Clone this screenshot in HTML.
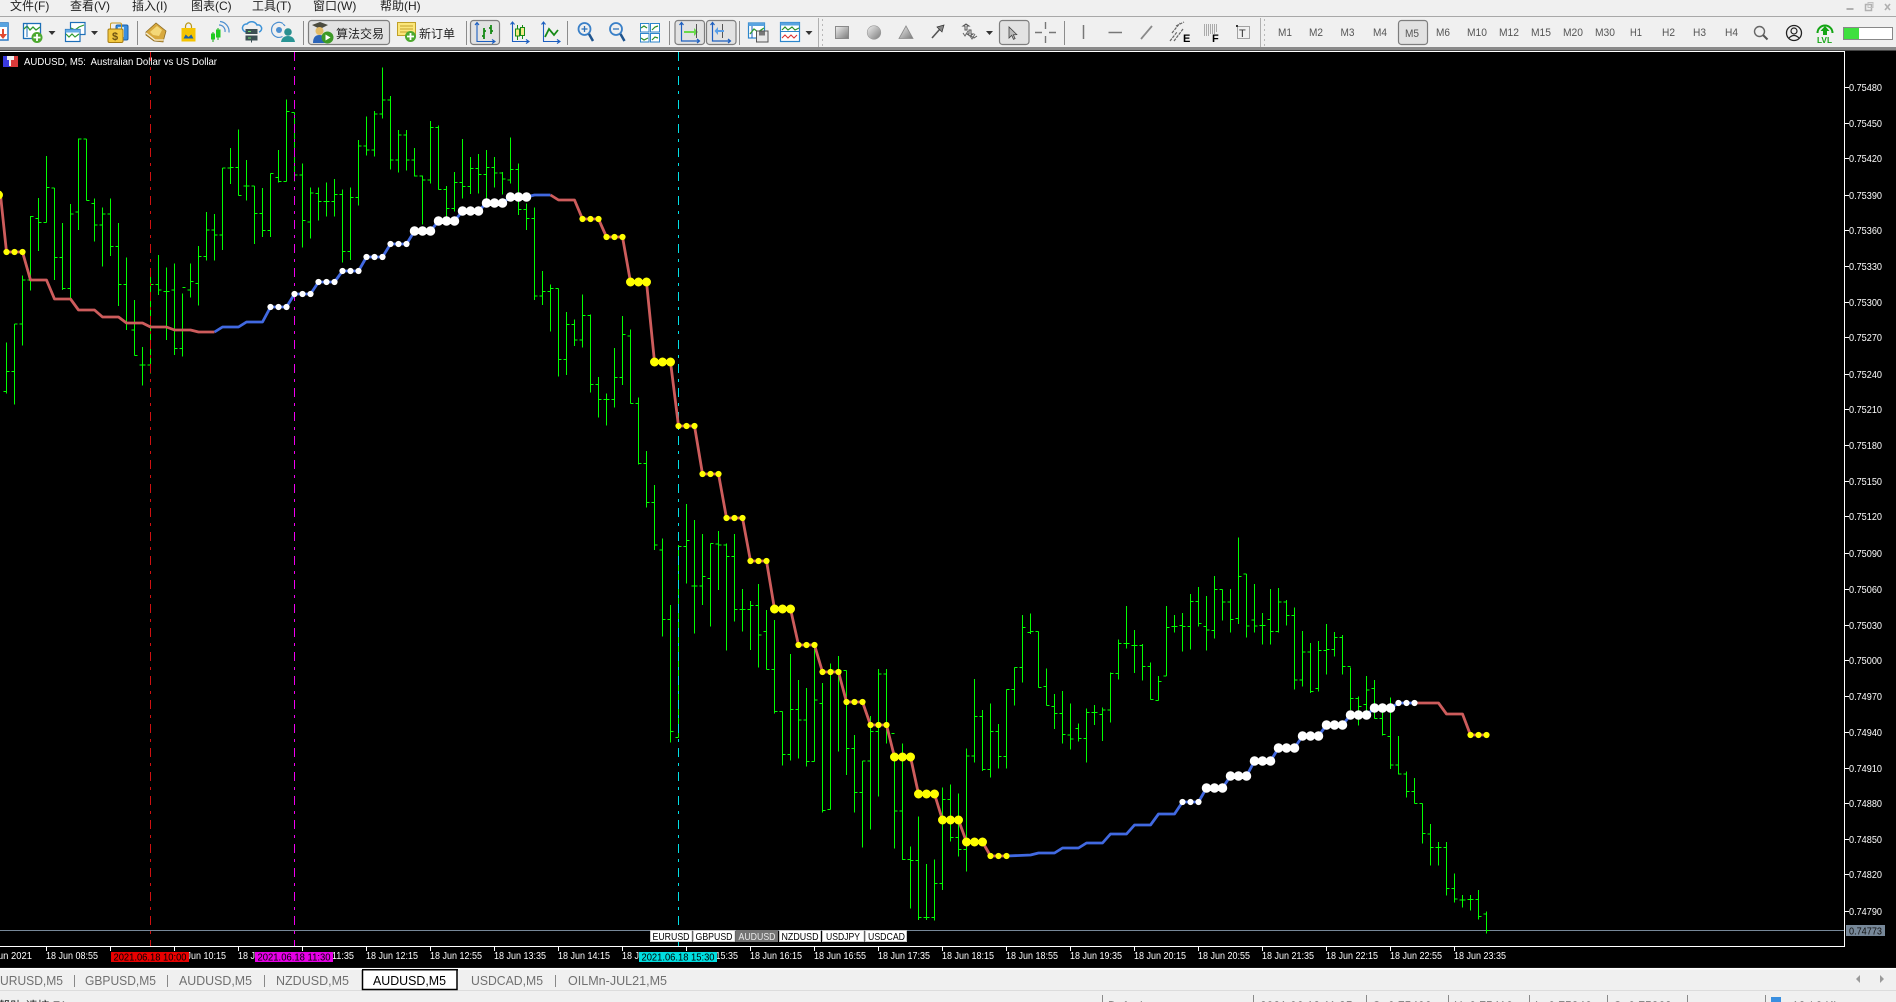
<!DOCTYPE html>
<html><head><meta charset="utf-8"><title>MT4</title>
<style>html,body{margin:0;padding:0;background:#f0f0f0;overflow:hidden;width:1896px;height:1002px}svg{display:block}
text{font-family:"Liberation Sans","Noto Sans CJK SC",sans-serif}</style></head><body>
<svg width="1896" height="1002" viewBox="0 0 1896 1002" xmlns="http://www.w3.org/2000/svg">
<rect width="1896" height="1002" fill="#f0f0f0"/>
<!-- menu -->
<g font-size="12" fill="#222">
<text x="10" y="10">文件(F)</text><text x="70" y="10">查看(V)</text><text x="132" y="10">插入(I)</text><text x="191" y="10">图表(C)</text><text x="252" y="10">工具(T)</text><text x="313" y="10">窗口(W)</text><text x="380" y="10">帮助(H)</text>
</g>
<rect x="0" y="16" width="1896" height="1" fill="#a8a8a8"/>
<rect x="0" y="47" width="1896" height="3" fill="#8a8a8a"/>
<rect x="0" y="50" width="1896" height="1" fill="#444"/>
<!-- window buttons -->
<path d="M1846.500 9h7" stroke="#b0b0b0" stroke-width="2"/><rect x="1865.500" y="4.500" width="6" height="6" fill="none" stroke="#b0b0b0" stroke-width="1.500"/><rect x="1868" y="2.500" width="5" height="5" fill="none" stroke="#c0c0c0"/><path d="M1885 4l5 6m0-6l-5 6" stroke="#b0b0b0" stroke-width="1.600"/>
<!-- pressed buttons -->
<g fill="#e2e2e2" stroke="#7e7e7e" stroke-width="1.200">
<rect x="308.500" y="20.500" width="81" height="24" rx="3"/><rect x="470.500" y="20.500" width="29" height="24" rx="3"/><rect x="675" y="20.500" width="29.500" height="24" rx="3"/><rect x="706.500" y="20.500" width="29.500" height="24" rx="3"/><rect x="999.500" y="20.500" width="29.500" height="24" rx="3"/><rect x="1398.500" y="20.500" width="29" height="24" rx="3"/>
</g>
<!-- separators -->
<path d="M137.500 21v24M303.500 21v24M466.500 21v24M567.500 21v24M669.500 21v24M739.500 21v24M1064.500 21v24" stroke="#8c8c8c"/>
<path d="M818.500 18v29M1260.500 18v29" stroke="#b0b0b0"/>
<path d="M822.500 19v28M1264.500 19v28" stroke="#b8b8b8" stroke-dasharray="2 3"/>
<!-- left icons -->
<rect x="-8" y="23" width="16" height="17" fill="#fff" stroke="#2b78c2" stroke-width="1.500"/><rect x="-8" y="23" width="16" height="4" fill="#5aa4e0"/><path d="M2 29v5h-3l4 5 4-5h-3v-5z" fill="#e2492f"/>
<rect x="23.500" y="23.500" width="17" height="15" fill="#fff" stroke="#1d6fb8" stroke-width="1.300"/><path d="M24 29l3-3 3 4 3-3 3 3 4-3" fill="none" stroke="#2f9b2f" stroke-width="1.300"/><path d="M27 24v13" stroke="#1d6fb8"/><circle cx="37" cy="37.500" r="5.500" fill="#4da92f"/><path d="M33.500 37.500h7M37 34v7" stroke="#fff" stroke-width="1.800"/>
<path d="M48.500 31h7l-3.500 4z" fill="#333"/>
<rect x="70.500" y="22.500" width="14.500" height="12" fill="#fff" stroke="#1d6fb8" stroke-width="1.200"/><path d="M71 28l4 2 4-3 5-2" fill="none" stroke="#2f9b2f" stroke-width="1.200"/>
<rect x="65.500" y="29.500" width="14.500" height="12" fill="#fff" stroke="#1d6fb8" stroke-width="1.200"/><rect x="65.500" y="29.500" width="14.500" height="3" fill="#68aee6"/><path d="M66 34l3 3 3-3 3 3 4-3" fill="none" stroke="#2f9b2f" stroke-width="1.200"/>
<path d="M91 31h7l-3.500 4z" fill="#333"/>
<rect x="116" y="25" width="12" height="15" rx="1.500" fill="#3a8fe0" stroke="#1c5fa8"/><rect x="118" y="27" width="6" height="10" fill="#bfe0fa"/>
<rect x="110.500" y="23" width="11" height="8" rx="1.500" fill="none" stroke="#c69a20"/><rect x="108" y="29" width="15" height="13.500" rx="1.500" fill="#f2c840" stroke="#a67c12"/><text x="112" y="40" font-size="11" fill="#6e5210" font-weight="bold">$</text>
<path d="M146 32l10-9 10 8-3 11-9-1-8-6z" fill="#d8a93e" stroke="#8a6a24" stroke-width=".8"/><path d="M150 32l7-6 5 4-3 6-6-1z" fill="#f4d878"/><path d="M146 33l9 7 9 0" stroke="#f4ecd0" fill="none" stroke-width="1.300"/>
<path d="M185.500 29v-2.500a2.500 3 0 0 1 6 0v2.500" fill="none" stroke="#b9971a" stroke-width="1.200"/><rect x="181.500" y="28" width="14" height="13.500" fill="#f5c400"/><path d="M183.500 38.500l2.200-4 2.800 2.500 2.800-2.500 2.200 4z" fill="#1c5fa8"/>
<path d="M213 32v10M218 28v12" stroke="#17a317"/><rect x="211" y="33.500" width="4" height="6" fill="#1fcb1f"/><rect x="216" y="29.500" width="4.500" height="8" fill="#1fcb1f"/><path d="M219 25a6 6 0 0 1 6 7M220 21.500a10 10 0 0 1 9 11" fill="none" stroke="#4c8fd0" stroke-width="1.200"/>
<path d="M246 32a4 4 0 0 1 1-8 6 6 0 0 1 10 1 3.500 3.500 0 0 1 2 7" fill="none" stroke="#3d93d8" stroke-width="1.500"/><rect x="245.500" y="29" width="12" height="5" fill="#3c5054"/><rect x="245.500" y="35.500" width="12" height="5" fill="#3c5054"/><path d="M248 31.500h3M248 38h3" stroke="#6fe06f"/><path d="M251.500 40.500v2" stroke="#3c5054"/>
<circle cx="279" cy="30" r="3" fill="#4c8fd0"/><path d="M283 23.500a7.500 7.500 0 1 0-.5 13M285 26a4 4 0 0 0-2-1.800" fill="none" stroke="#4c8fd0" stroke-width="1.200"/><circle cx="288" cy="32" r="3.800" fill="#2a8f8f"/><path d="M281 42q1-6 7-6t7 6z" fill="#2a9595"/>
<!-- algo -->
<path d="M312 25l8-3 8 3-8 4z" fill="#4b4b3f"/><circle cx="319.500" cy="31" r="4" fill="#e3bb66"/><path d="M313 43q0-8 6.500-8t6 8z" fill="#2c64b8"/><circle cx="327.500" cy="37.500" r="6" fill="#3d9a27"/><path d="M325.500 34.500l5 3-5 3z" fill="#fff"/>
<g font-size="12" fill="#222"><text x="336" y="38">算法交易</text><text x="419" y="38">新订单</text></g>
<rect x="397.500" y="22.500" width="18" height="13" fill="#fbe67a" stroke="#c0a028"/><path d="M400 26h13M400 29h13M400 32h8" stroke="#c5a22c"/><circle cx="410.500" cy="36.500" r="5.500" fill="#4da92f"/><path d="M407 36.500h7M410.500 33v7" stroke="#fff" stroke-width="1.800"/>
<!-- chart type -->
<g fill="none" stroke="#1d5fc0" stroke-width="1.100"><path d="M477 23v18.500h17M475 25l2-2.500 2 2.500M492 39.500l3 2-3 2"/><path d="M512.500 22v19.500h16M510.500 24.500l2-2.500 2 2.500M526 39.500l3 2-3 2"/><path d="M543.500 22v19.500h16M541.500 24.500l2-2.500 2 2.500M557 39.500l3 2-3 2"/></g>
<path d="M484 28v11M491 25v9M482 36h2M484 31h2M489 28h2M491 31h2" stroke="#168a16" stroke-width="1.800" fill="none"/>
<path d="M517.500 25v15M522.500 25v14" stroke="#168a16"/><rect x="515.500" y="29" width="4" height="7" fill="#f4e88a" stroke="#168a16"/><rect x="520.500" y="27.500" width="4" height="8" fill="#f4e88a" stroke="#168a16"/>
<path d="M545 37l4-8 5 6 4-5" fill="none" stroke="#168a16" stroke-width="1.800"/>
<!-- zoom -->
<g fill="none" stroke="#3a80c8" stroke-width="1.800"><circle cx="584.500" cy="29" r="6"/><circle cx="616" cy="29" r="6"/></g><path d="M589 34l4 7M620.500 34l4 7" stroke="#20558f" stroke-width="2.500"/><path d="M581.500 29h6M584.500 26v6M613 29h6" stroke="#2a70b8" stroke-width="1.300"/>
<!-- tile -->
<g fill="#fff" stroke="#2d86cc"><rect x="640.500" y="23.500" width="8.500" height="8.500"/><rect x="650.500" y="23.500" width="9" height="8.500"/><rect x="640.500" y="33.500" width="8.500" height="8.500"/><rect x="650.500" y="33.500" width="9" height="8.500"/></g>
<path d="M641 28l3-2 3 2M652 30l3-3 3-1M641 38l3 2 4-2M652 40l3-3 3 1" stroke="#2b8f2b" fill="none" stroke-width="1.200"/>
<!-- chart shift / autoscroll -->
<g fill="none" stroke="#1d5fc0" stroke-width="1.200"><path d="M681.500 23v18h17M679.500 25l2-2.500 2 2.500M697 39l2.500 2-2.500 2"/><path d="M712.500 23v18h17M710.500 25l2-2.500 2 2.500M728 39l2.500 2-2.500 2"/></g>
<path d="M684 31h10v-3l4 4-4 4v-3h-10z" fill="#69d94a"/><path d="M696.500 24v14M722.500 24v14" stroke="#555"/><path d="M729 30h-6v-3l-3.500 4 3.500 4v-3h6z" fill="#5a9fe8" transform="translate(-5,0)"/>
<!-- template / indicators -->
<rect x="748.500" y="23" width="16" height="15" fill="#fff" stroke="#2d86cc" stroke-width="1.200"/><rect x="748.500" y="23" width="16" height="3" fill="#5aa4e0"/><path d="M752 26v12" stroke="#1d5fc0"/><path d="M750 34l4-5 4 3 6-4" fill="none" stroke="#2f9b2f" stroke-width="1.300"/><rect x="756.500" y="31" width="11.500" height="11" fill="#e8e8e8" stroke="#555"/><rect x="759" y="31.500" width="6" height="4" fill="#777"/>
<rect x="780.500" y="22.500" width="19" height="19" fill="#fff" stroke="#2d86cc" stroke-width="1.200"/><rect x="780.500" y="22.500" width="19" height="3" fill="#5aa4e0"/><path d="M781 31.500h18" stroke="#2d86cc"/><path d="M782 30l3-3 3 3 4-3 3 3 4-2" fill="none" stroke="#2a8f2a" stroke-width="1.200"/><path d="M782 38l3-3 3 3 3-3 3 3 3-3" fill="none" stroke="#d33" stroke-width="1.100"/>
<path d="M805.500 31h7l-3.500 4z" fill="#333"/>
<!-- objects -->
<defs><linearGradient id="g" x1="0" y1="0" x2="1" y2="1"><stop offset="0" stop-color="#f0f0f0"/><stop offset="1" stop-color="#7a7a7a"/></linearGradient></defs>
<rect x="835.500" y="26.500" width="13" height="12" fill="url(#g)" stroke="#8a8a8a"/>
<circle cx="874" cy="32.500" r="6.800" fill="url(#g)" stroke="#9a9a9a" stroke-width=".6"/>
<path d="M906 26l7 12.500h-14z" fill="url(#g)" stroke="#8a8a8a" stroke-width=".8"/>
<path d="M932 38l8-9" stroke="#555" stroke-width="1.600"/><path d="M937 27l7-2-2 7z" fill="#888" stroke="#333" stroke-width=".7"/>
<path d="M963 26l3-2 3 2h-2v4h-2v-4zM967 34l3 2 3-2h-2v-4h-2v4zM971 36l3 2 3-2" fill="none" stroke="#555" stroke-width="1"/><path d="M963 33l2 3 3-5M970 36l2 3 3-5" fill="none" stroke="#666"/>
<path d="M986 31h7l-3.500 4z" fill="#333"/>
<path d="M1009 27v11l2.700-2.700 1.800 4 1.600-.7-1.800-3.800 3.500-.2z" fill="#bbb" stroke="#444" stroke-width=".8"/>
<path d="M1045.500 22v7M1045.500 36v7M1035 32.500h7M1049 32.500h7" stroke="#777" stroke-width="1.400"/>
<path d="M1083.500 25v14" stroke="#777" stroke-width="1.500"/>
<path d="M1108.500 32.500h13.500" stroke="#777" stroke-width="1.500"/>
<path d="M1141 39l11-13" stroke="#8a8a8a" stroke-width="1.800"/>
<path d="M1170 41l7-9M1174 41l9-12M1172 33l8-10M1176 26l8-4" stroke="#666" stroke-width="1.200" fill="none" stroke-dasharray="3 1"/><text x="1183" y="42" font-size="11" font-weight="bold" fill="#000">E</text>
<path d="M1204 25h14M1204 27h14M1204 29h14M1204 31h14M1204 33h12M1204 35h5" stroke="#666" stroke-dasharray="1 1"/><text x="1212" y="42" font-size="11" font-weight="bold" fill="#000">F</text>
<rect x="1237.500" y="26.500" width="12" height="12" fill="none" stroke="#555" stroke-dasharray="1 1"/><rect x="1236" y="25" width="2" height="2" fill="#333"/><text x="1239" y="37" font-size="11" fill="#333">T</text>
<!-- timeframes -->
<g font-size="11" fill="#555">
<text x="1278" y="36" textLength="14" lengthAdjust="spacingAndGlyphs">M1</text><text x="1309" y="36" textLength="14" lengthAdjust="spacingAndGlyphs">M2</text><text x="1340.500" y="36" textLength="14" lengthAdjust="spacingAndGlyphs">M3</text><text x="1373" y="36" textLength="14" lengthAdjust="spacingAndGlyphs">M4</text><text x="1405" y="37" textLength="14" lengthAdjust="spacingAndGlyphs">M5</text><text x="1436" y="36" textLength="14" lengthAdjust="spacingAndGlyphs">M6</text><text x="1467" y="36" textLength="20" lengthAdjust="spacingAndGlyphs">M10</text><text x="1499" y="36" textLength="20" lengthAdjust="spacingAndGlyphs">M12</text><text x="1531" y="36" textLength="20" lengthAdjust="spacingAndGlyphs">M15</text><text x="1563" y="36" textLength="20" lengthAdjust="spacingAndGlyphs">M20</text><text x="1595" y="36" textLength="20" lengthAdjust="spacingAndGlyphs">M30</text><text x="1630" y="36" textLength="12" lengthAdjust="spacingAndGlyphs">H1</text><text x="1662" y="36" textLength="13" lengthAdjust="spacingAndGlyphs">H2</text><text x="1693" y="36" textLength="13" lengthAdjust="spacingAndGlyphs">H3</text><text x="1725" y="36" textLength="13" lengthAdjust="spacingAndGlyphs">H4</text>
</g>
<circle cx="1759.500" cy="31.500" r="5" fill="none" stroke="#666" stroke-width="1.400"/><path d="M1763 35l4.500 4.500" stroke="#555" stroke-width="2"/>
<circle cx="1794" cy="33" r="7.500" fill="none" stroke="#222" stroke-width="1.300"/><circle cx="1794" cy="31" r="3" fill="none" stroke="#222" stroke-width="1.200"/><path d="M1789 38q5-5 10 0" fill="none" stroke="#222" stroke-width="1.200"/>
<path d="M1817.500 33a7.500 7.500 0 0 1 15 0" fill="none" stroke="#14a514" stroke-width="2"/><path d="M1825 26l4.500 5h-2.500v4h-4v-4h-2.500z" fill="#14a514"/><text x="1817" y="43" font-size="8.500" fill="#14a514" font-weight="bold" textLength="15" lengthAdjust="spacingAndGlyphs">LVL</text>
<rect x="1843.500" y="27.500" width="49" height="12" fill="#fff" stroke="#888"/><rect x="1844" y="28" width="15" height="11" fill="#3fe03f"/>
<!-- chart -->
<rect x="0" y="51" width="1896" height="917" fill="#000"/>
<path d="M0 51.500H1844.500V946.500H0" fill="none" stroke="#fff"/>
<path d="M0 930.500H1844" stroke="#778899"/>
<!-- bars -->
<g fill="none" stroke="#0f0" shape-rendering="crispEdges">
<path vector-effect="non-scaling-stroke" transform="translate(0 50) scale(1 .33333)" d="M6.500 877V1030M3.500 1025h3M6.500 964h3M14.500 822V1063M11.500 964h3M14.500 822h3M22.500 676V887M19.500 822h3M22.500 690h3M30.500 498V722M27.500 690h3M30.500 500h3M38.500 444V603M35.500 505h3M38.500 517h3M46.500 318V517M43.500 517h3M46.500 412h3M54.500 414V690M51.500 414h3M54.500 622h3M62.500 519V720M59.500 622h3M62.500 716h3M70.500 462V745M67.500 716h3M70.500 492h3M78.500 265V540M75.500 486h3M78.500 267h3M86.500 267V452M83.500 267h3M86.500 452h3M94.500 445V575M91.500 460h3M94.500 525h3M102.500 472V650M99.500 525h3M102.500 492h3M110.500 445V618M107.500 492h3M110.500 590h3M118.500 519V768M115.500 590h3M118.500 703h3M126.500 622V840M123.500 703h3M126.500 820h3M134.500 750V917M131.500 840h3M134.500 917h3M142.500 891V1007M139.500 945h3M142.500 945h3M150.500 655V970M147.500 945h3M150.500 703h3M158.500 615V735M155.500 703h3M158.500 720h3M166.500 652V870M163.500 725h3M166.500 725h3M174.500 640V915M171.500 720h3M174.500 895h3M182.500 730V920M179.500 895h3M182.500 712h3M190.500 640V743M187.500 720h3M190.500 695h3M198.500 588V767M195.500 700h3M198.500 620h3M206.500 486V632M203.500 620h3M206.500 540h3M214.500 492V632M211.500 540h3M214.500 555h3M222.500 354V600M219.500 555h3M222.500 354h3M230.500 294V402M227.500 354h3M230.500 352h3M238.500 238V437M235.500 352h3M238.500 437h3M246.500 330V452M243.500 408h3M246.500 408h3M254.500 408V582M251.500 408h3M254.500 490h3M262.500 414V561M259.500 490h3M262.500 541h3M270.500 370V561M267.500 541h3M270.500 370h3M278.500 300V398M275.500 382h3M278.500 395h3M286.500 148V395M283.500 395h3M286.500 185h3M294.500 187V395M291.500 187h3M294.500 375h3M302.500 340V593M299.500 375h3M302.500 511h3M310.500 412V565M307.500 516h3M310.500 429h3M318.500 412V512M315.500 430h3M318.500 454h3M326.500 397V500M323.500 454h3M326.500 454h3M334.500 387V500M331.500 454h3M334.500 434h3M342.500 418V638M339.500 434h3M342.500 605h3M350.500 412V630M347.500 605h3M350.500 442h3M358.500 270V467M355.500 442h3M358.500 288h3M366.500 200V317M363.500 288h3M366.500 300h3M374.500 183V320M371.500 300h3M374.500 192h3M382.500 52V205M379.500 192h3M382.500 150h3M390.500 138V358M387.500 150h3M390.500 330h3M398.500 240V367M395.500 330h3M398.500 255h3M406.500 240V362M403.500 255h3M406.500 330h3M414.500 294V380M411.500 330h3M414.500 378h3M422.500 376V524M419.500 378h3M422.500 390h3M430.500 213V400M427.500 390h3M430.500 232h3M438.500 226V418M435.500 232h3M438.500 418h3M446.500 408V500M443.500 418h3M446.500 475h3M454.500 366V484M451.500 475h3M454.500 397h3M462.500 267V446M459.500 397h3M462.500 410h3M470.500 321V432M467.500 410h3M470.500 356h3M478.500 312V430M475.500 356h3M478.500 373h3M486.500 300V450M483.500 373h3M486.500 352h3M494.500 321V412M491.500 352h3M494.500 369h3M502.500 366V433M499.500 369h3M502.500 387h3M510.500 262V400M507.500 390h3M510.500 358h3M518.500 340V495M515.500 358h3M518.500 479h3M526.500 460V540M523.500 479h3M526.500 506h3M534.500 472V750M531.500 506h3M534.500 738h3M542.500 663V765M539.500 738h3M542.500 725h3M550.500 703V845M547.500 725h3M550.500 715h3M558.500 715V980M555.500 715h3M558.500 928h3M566.500 786V975M563.500 928h3M566.500 823h3M574.500 808V888M571.500 823h3M574.500 870h3M582.500 733V893M579.500 870h3M582.500 796h3M590.500 793V1027M587.500 796h3M590.500 1003h3M598.500 981V1103M595.500 1003h3M598.500 1048h3M606.500 1030V1127M603.500 1048h3M606.500 1048h3M614.500 894V1073M611.500 1048h3M614.500 982h3M622.500 798V1005M619.500 982h3M622.500 853h3M630.500 838V1060M627.500 858h3M630.500 1060h3M638.500 1042V1243M635.500 1060h3M638.500 1240h3"/>
<path vector-effect="non-scaling-stroke" transform="translate(0 450) scale(1 .33333)" d="M646.500 3V173M643.500 40h3M646.500 157h3M654.500 105V300M651.500 157h3M654.500 285h3M662.500 265V560M659.500 300h3M662.500 508h3M670.500 465V878M667.500 508h3M670.500 845h3M678.500 285V862M675.500 862h3M678.500 290h3M686.500 162V400M683.500 290h3M686.500 272h3M694.500 210V551M691.500 408h3M694.500 408h3M702.500 252V465M699.500 408h3M702.500 380h3M710.500 280V530M707.500 385h3M710.500 280h3M718.500 243V420M715.500 282h3M718.500 285h3M726.500 280V602M723.500 285h3M726.500 320h3M734.500 252V515M731.500 320h3M734.500 478h3M742.500 417V545M739.500 478h3M742.500 478h3M750.500 453V600M747.500 478h3M750.500 466h3M758.500 402V653M755.500 466h3M758.500 555h3M766.500 480V658M763.500 545h3M766.500 658h3M774.500 510V790M771.500 658h3M774.500 785h3M782.500 785V947M779.500 785h3M782.500 913h3M790.500 612V932M787.500 913h3M790.500 778h3M798.500 690V925M795.500 778h3M798.500 810h3M806.500 714V950M803.500 810h3M806.500 934h3M814.500 590V934M811.500 934h3M814.500 750h3M822.500 699V1087M819.500 760h3M822.500 1082h3M830.500 640V1078M827.500 1078h3M830.500 660h3M838.500 618V905M835.500 662h3M838.500 662h3M846.500 662V975M843.500 662h3M846.500 895h3M854.500 855V1088M851.500 895h3M854.500 1027h3M862.500 933V1193M859.500 1027h3M862.500 933h3M870.500 798V1138M867.500 933h3M870.500 845h3M878.500 657V1040M875.500 845h3M878.500 672h3M886.500 657V880M883.500 672h3M886.500 848h3M894.500 920V1196M891.500 850h3M894.500 1083h3M902.500 880V1230M899.500 1083h3M902.500 1228h3M910.500 1190V1376M907.500 1228h3M910.500 1232h3M918.500 1100V1410M915.500 1232h3M918.500 1403h3M926.500 1242V1410M923.500 1403h3M926.500 1403h3M934.500 1228V1412M931.500 1403h3M934.500 1300h3M942.500 1012V1320M939.500 1300h3M942.500 1048h3M950.500 1003V1175M947.500 1048h3M950.500 1163h3M958.500 1030V1220M955.500 1163h3M958.500 1198h3M966.500 895V1265M963.500 1198h3M966.500 918h3M974.500 687V938M971.500 918h3M974.500 800h3M982.500 780V963M979.500 800h3M982.500 958h3M990.500 760V983M987.500 958h3M990.500 845h3M998.500 822V955M995.500 845h3M998.500 920h3M1006.500 718V955M1003.500 920h3M1006.500 718h3M1014.500 652V767M1011.500 718h3M1014.500 652h3M1022.500 495V698M1019.500 652h3M1022.500 533h3M1030.500 490V552M1027.500 547h3M1030.500 545h3M1038.500 545V712M1035.500 545h3M1038.500 712h3M1046.500 655V766M1043.500 710h3M1046.500 766h3M1054.500 732V837M1051.500 770h3M1054.500 790h3M1062.500 723V881M1059.500 790h3M1062.500 853h3M1070.500 760V898M1067.500 855h3M1070.500 867h3M1078.500 820V875M1075.500 835h3M1078.500 865h3M1086.500 775V938M1083.500 865h3M1086.500 787h3M1094.500 765V825M1091.500 787h3M1094.500 787h3"/>
<path vector-effect="non-scaling-stroke" transform="translate(0 520) scale(1 .33333)" d="M1102.500 562V663M1099.500 583h3M1102.500 570h3M1110.500 458V608M1107.500 570h3M1110.500 460h3M1118.500 358V478M1115.500 460h3M1118.500 370h3M1126.500 258V386M1123.500 370h3M1126.500 370h3M1134.500 330V459M1131.500 376h3M1134.500 376h3M1142.500 372V482M1139.500 376h3M1142.500 440h3M1150.500 427V538M1147.500 440h3M1150.500 538h3M1158.500 468V541M1155.500 541h3M1158.500 484h3M1166.500 258V468M1163.500 468h3M1166.500 322h3M1174.500 285V338M1171.500 320h3M1174.500 320h3M1182.500 279V395M1179.500 317h3M1182.500 319h3M1190.500 222V389M1187.500 319h3M1190.500 244h3M1198.500 201V320M1195.500 244h3M1198.500 310h3M1206.500 228V392M1203.500 319h3M1206.500 330h3M1214.500 168V356M1211.500 331h3M1214.500 208h3M1222.500 208V302M1219.500 208h3M1222.500 246h3M1230.500 207V338M1227.500 246h3M1230.500 298h3M1238.500 52V312M1235.500 296h3M1238.500 170h3M1246.500 162V353M1243.500 162h3M1246.500 318h3M1254.500 192V338M1251.500 300h3M1254.500 318h3M1262.500 279V374M1259.500 316h3M1262.500 316h3M1270.500 207V374M1267.500 298h3M1270.500 334h3M1278.500 204V338M1275.500 335h3M1278.500 246h3M1286.500 240V317M1283.500 246h3M1286.500 286h3M1294.500 262V509M1291.500 286h3M1294.500 480h3M1302.500 333V500M1299.500 480h3M1302.500 396h3M1310.500 369V519M1307.500 396h3M1310.500 515h3M1318.500 363V515M1315.500 506h3M1318.500 391h3M1326.500 312V464M1323.500 391h3M1326.500 388h3M1334.500 336V410M1331.500 388h3M1334.500 352h3M1342.500 345V464M1339.500 352h3M1342.500 440h3M1350.500 442V570M1347.500 440h3M1350.500 535h3M1358.500 530V616M1355.500 535h3M1358.500 560h3M1366.500 468V575M1363.500 553h3M1366.500 510h3M1374.500 480V595M1371.500 505h3M1374.500 595h3M1382.500 575V647M1379.500 595h3M1382.500 644h3M1390.500 532V747M1387.500 650h3M1390.500 735h3M1398.500 648V763M1395.500 735h3M1398.500 762h3M1406.500 754V833M1403.500 762h3M1406.500 814h3M1414.500 774V850M1411.500 814h3M1414.500 850h3M1422.500 850V971M1419.500 850h3M1422.500 940h3M1430.500 912V1037M1427.500 942h3M1430.500 982h3M1438.500 966V1037M1435.500 982h3M1438.500 982h3M1446.500 966V1127M1443.500 982h3M1446.500 1105h3M1454.500 1060V1148M1451.500 1105h3M1454.500 1137h3M1462.500 1125V1163M1459.500 1140h3M1462.500 1140h3M1470.500 1125V1172M1467.500 1138h3M1470.500 1138h3M1478.500 1110V1198M1475.500 1138h3M1478.500 1190h3M1486.500 1175V1240M1483.500 1182h3M1486.500 1232h3"/>
</g>
<!-- vertical lines -->
<g stroke-dasharray="9 6 3 6" shape-rendering="crispEdges">
<path d="M150.500 52V946" stroke="#d01010"/><path d="M294.500 52V946" stroke="#f000f0"/><path d="M678.500 52V946" stroke="#00e0e6"/>
</g>
<!-- indicator -->
<g fill="none" transform="translate(.5 0)">
<g stroke-width="2.800" stroke-linejoin="round">
<polyline stroke="#cd5c5c" points="0,195 6,252 22,252 30,280 46,280 54,299 70,299 78,310 94,310 102,317 118,317 126,323 142,323 150,327 166,327 174,330 190,330 198,332 214,332"/>
<polyline stroke="#4169e1" points="214,332 222,327 238,327 246,322 262,322 270,307 286,307 294,294 310,294 318,282 334,282 342,271 358,271 366,257 382,257 390,244 406,244 414,231 430,231 438,221 454,221 462,211 478,211 486,203 502,203 510,197 526,197 534,195 550,195"/>
<polyline stroke="#cd5c5c" points="550,195 558,200 574,200 582,219 598,219 606,237 622,237 630,282 646,282 654,362 670,362 678,426 694,426 702,474 718,474 726,518 742,518 750,561 766,561 774,609 790,609 798,645 814,645 822,672 838,672 846,702 862,702 870,725 886,725 894,757 910,757 918,794 934,794 942,820 958,820 966,842 982,842 990,856 1006,856"/>
<polyline stroke="#4169e1" points="1006,856 1030,855 1038,853 1054,853 1062,848 1078,848 1086,843 1102,843 1110,834 1126,834 1134,825 1150,825 1158,814 1174,814 1182,802 1198,802 1206,788 1222,788 1230,776 1246,776 1254,761 1270,761 1278,748 1294,748 1302,736 1318,736 1326,725 1342,725 1350,715 1366,715 1374,708 1390,708 1398,703 1414,703"/>
<polyline stroke="#cd5c5c" points="1414,703 1438,703 1446,714 1462,714 1470,735 1486,735"/>
</g>
<g stroke-linecap="round">
<path stroke="#fff" stroke-width="6.200" d="M270 307h0m8 0h0m8 0h0M294 294h0m8 0h0m8 0h0M318 282h0m8 0h0m8 0h0M342 271h0m8 0h0m8 0h0M366 257h0m8 0h0m8 0h0M390 244h0m8 0h0m8 0h0M1182 802h0m8 0h0m8 0h0M1398 703h0m8 0h0m8 0h0"/>
<path stroke="#fff" stroke-width="9.500" d="M414 231h0m8 0h0m8 0h0M438 221h0m8 0h0m8 0h0M462 211h0m8 0h0m8 0h0M486 203h0m8 0h0m8 0h0M510 197h0m8 0h0m8 0h0M1206 788h0m8 0h0m8 0h0M1230 776h0m8 0h0m8 0h0M1254 761h0m8 0h0m8 0h0M1278 748h0m8 0h0m8 0h0M1302 736h0m8 0h0m8 0h0M1326 725h0m8 0h0m8 0h0M1350 715h0m8 0h0m8 0h0M1374 708h0m8 0h0m8 0h0"/>
<path stroke="#ff0" stroke-width="6.200" d="M6 252h0m8 0h0m8 0h0M582 219h0m8 0h0m8 0h0M606 237h0m8 0h0m8 0h0M678 426h0m8 0h0m8 0h0M702 474h0m8 0h0m8 0h0M726 518h0m8 0h0m8 0h0M750 561h0m8 0h0m8 0h0M798 645h0m8 0h0m8 0h0M822 672h0m8 0h0m8 0h0M846 702h0m8 0h0m8 0h0M870 725h0m8 0h0m8 0h0M990 856h0m8 0h0m8 0h0M1470 735h0m8 0h0m8 0h0"/>
<path stroke="#ff0" stroke-width="9" d="M-2 195h0M630 282h0m8 0h0m8 0h0M654 362h0m8 0h0m8 0h0M774 609h0m8 0h0m8 0h0M894 757h0m8 0h0m8 0h0M918 794h0m8 0h0m8 0h0M942 820h0m8 0h0m8 0h0M966 842h0m8 0h0m8 0h0"/>
</g>
</g>
<!-- legend -->
<rect x="3" y="56" width="7" height="11" fill="#3a3ae0"/><rect x="10" y="56" width="8" height="11" fill="#d93a3a"/><rect x="7" y="56" width="7" height="4" fill="#eee"/><rect x="9" y="60" width="2" height="6" fill="#eee"/>
<text x="24" y="65" font-size="10.500" fill="#fff" textLength="193" lengthAdjust="spacingAndGlyphs" xml:space="preserve">AUDUSD, M5:  Australian Dollar vs US Dollar</text>
<!-- price axis -->
<path d="M1845 87.500h4M1845 123.500h4M1845 158.500h4M1845 195.500h4M1845 230.500h4M1845 266.500h4M1845 302.500h4M1845 337.500h4M1845 374.500h4M1845 409.500h4M1845 445.500h4M1845 481.500h4M1845 516.500h4M1845 553.500h4M1845 589.500h4M1845 625.500h4M1845 660.500h4M1845 696.500h4M1845 732.500h4M1845 768.500h4M1845 803.500h4M1845 839.500h4M1845 874.500h4M1845 911.500h4" stroke="#fff"/>
<g font-size="10.500" fill="#fff">
<text x="1849" y="91" textLength="33" lengthAdjust="spacingAndGlyphs">0.75480</text><text x="1849" y="127" textLength="33" lengthAdjust="spacingAndGlyphs">0.75450</text><text x="1849" y="162" textLength="33" lengthAdjust="spacingAndGlyphs">0.75420</text><text x="1849" y="199" textLength="33" lengthAdjust="spacingAndGlyphs">0.75390</text><text x="1849" y="234" textLength="33" lengthAdjust="spacingAndGlyphs">0.75360</text><text x="1849" y="270" textLength="33" lengthAdjust="spacingAndGlyphs">0.75330</text><text x="1849" y="306" textLength="33" lengthAdjust="spacingAndGlyphs">0.75300</text><text x="1849" y="341" textLength="33" lengthAdjust="spacingAndGlyphs">0.75270</text><text x="1849" y="378" textLength="33" lengthAdjust="spacingAndGlyphs">0.75240</text><text x="1849" y="413" textLength="33" lengthAdjust="spacingAndGlyphs">0.75210</text><text x="1849" y="449" textLength="33" lengthAdjust="spacingAndGlyphs">0.75180</text><text x="1849" y="485" textLength="33" lengthAdjust="spacingAndGlyphs">0.75150</text><text x="1849" y="520" textLength="33" lengthAdjust="spacingAndGlyphs">0.75120</text><text x="1849" y="557" textLength="33" lengthAdjust="spacingAndGlyphs">0.75090</text><text x="1849" y="593" textLength="33" lengthAdjust="spacingAndGlyphs">0.75060</text><text x="1849" y="629" textLength="33" lengthAdjust="spacingAndGlyphs">0.75030</text><text x="1849" y="664" textLength="33" lengthAdjust="spacingAndGlyphs">0.75000</text><text x="1849" y="700" textLength="33" lengthAdjust="spacingAndGlyphs">0.74970</text><text x="1849" y="736" textLength="33" lengthAdjust="spacingAndGlyphs">0.74940</text><text x="1849" y="772" textLength="33" lengthAdjust="spacingAndGlyphs">0.74910</text><text x="1849" y="807" textLength="33" lengthAdjust="spacingAndGlyphs">0.74880</text><text x="1849" y="843" textLength="33" lengthAdjust="spacingAndGlyphs">0.74850</text><text x="1849" y="878" textLength="33" lengthAdjust="spacingAndGlyphs">0.74820</text><text x="1849" y="915" textLength="33" lengthAdjust="spacingAndGlyphs">0.74790</text>
</g>
<rect x="1846" y="925" width="39" height="11" fill="#778899"/><text x="1849" y="934.500" font-size="10.500" fill="#111" textLength="33" lengthAdjust="spacingAndGlyphs">0.74773</text>
<!-- time axis -->
<path d="M46.500 947v4M110.500 947v4M174.500 947v4M238.500 947v4M302.500 947v4M366.500 947v4M430.500 947v4M494.500 947v4M558.500 947v4M622.500 947v4M686.500 947v4M750.500 947v4M814.500 947v4M878.500 947v4M942.500 947v4M1006.500 947v4M1070.500 947v4M1134.500 947v4M1198.500 947v4M1262.500 947v4M1326.500 947v4M1390.500 947v4M1454.500 947v4" stroke="#fff"/>
<g font-size="10.500" fill="#fff">
<text x="-20" y="959" textLength="52" lengthAdjust="spacingAndGlyphs">18 Jun 2021</text><text x="46" y="959" textLength="52" lengthAdjust="spacingAndGlyphs">18 Jun 08:55</text><text x="174" y="959" textLength="52" lengthAdjust="spacingAndGlyphs">18 Jun 10:15</text><text x="238" y="959" textLength="52" lengthAdjust="spacingAndGlyphs">18 Jun 10:55</text><text x="302" y="959" textLength="52" lengthAdjust="spacingAndGlyphs">18 Jun 11:35</text><text x="366" y="959" textLength="52" lengthAdjust="spacingAndGlyphs">18 Jun 12:15</text><text x="430" y="959" textLength="52" lengthAdjust="spacingAndGlyphs">18 Jun 12:55</text><text x="494" y="959" textLength="52" lengthAdjust="spacingAndGlyphs">18 Jun 13:35</text><text x="558" y="959" textLength="52" lengthAdjust="spacingAndGlyphs">18 Jun 14:15</text><text x="622" y="959" textLength="52" lengthAdjust="spacingAndGlyphs">18 Jun 14:55</text><text x="686" y="959" textLength="52" lengthAdjust="spacingAndGlyphs">18 Jun 15:35</text><text x="750" y="959" textLength="52" lengthAdjust="spacingAndGlyphs">18 Jun 16:15</text><text x="814" y="959" textLength="52" lengthAdjust="spacingAndGlyphs">18 Jun 16:55</text><text x="878" y="959" textLength="52" lengthAdjust="spacingAndGlyphs">18 Jun 17:35</text><text x="942" y="959" textLength="52" lengthAdjust="spacingAndGlyphs">18 Jun 18:15</text><text x="1006" y="959" textLength="52" lengthAdjust="spacingAndGlyphs">18 Jun 18:55</text><text x="1070" y="959" textLength="52" lengthAdjust="spacingAndGlyphs">18 Jun 19:35</text><text x="1134" y="959" textLength="52" lengthAdjust="spacingAndGlyphs">18 Jun 20:15</text><text x="1198" y="959" textLength="52" lengthAdjust="spacingAndGlyphs">18 Jun 20:55</text><text x="1262" y="959" textLength="52" lengthAdjust="spacingAndGlyphs">18 Jun 21:35</text><text x="1326" y="959" textLength="52" lengthAdjust="spacingAndGlyphs">18 Jun 22:15</text><text x="1390" y="959" textLength="52" lengthAdjust="spacingAndGlyphs">18 Jun 22:55</text><text x="1454" y="959" textLength="52" lengthAdjust="spacingAndGlyphs">18 Jun 23:35</text>
</g>
<rect x="111" y="952" width="78" height="10" fill="#e80000"/><rect x="255" y="952" width="78" height="10" fill="#e600e6"/><rect x="639" y="952" width="78" height="10" fill="#00dde0"/>
<g font-size="10.500" fill="#000"><text x="113.500" y="960.500" textLength="73" lengthAdjust="spacingAndGlyphs">2021.06.18 10:00</text><text x="257.500" y="960.500" textLength="73" lengthAdjust="spacingAndGlyphs">2021.06.18 11:30</text><text x="641.500" y="960.500" textLength="73" lengthAdjust="spacingAndGlyphs">2021.06.18 15:30</text></g>
<!-- symbol buttons -->
<g fill="#fff" stroke="#c8c8c8"><rect x="650.500" y="930.500" width="41.500" height="11"/><rect x="693.500" y="930.500" width="41.500" height="11"/><rect x="779.500" y="930.500" width="41" height="11"/><rect x="822.500" y="930.500" width="41.500" height="11"/><rect x="865.500" y="930.500" width="41" height="11"/></g>
<rect x="736" y="930" width="42" height="12" fill="#747474"/>
<g font-size="10.500" fill="#000"><text x="652.500" y="940" textLength="37" lengthAdjust="spacingAndGlyphs">EURUSD</text><text x="695.500" y="940" textLength="37" lengthAdjust="spacingAndGlyphs">GBPUSD</text><text x="738.500" y="940" textLength="37" lengthAdjust="spacingAndGlyphs" fill="#e8e8e8">AUDUSD</text><text x="781.500" y="940" textLength="37" lengthAdjust="spacingAndGlyphs">NZDUSD</text><text x="826" y="940" textLength="34" lengthAdjust="spacingAndGlyphs">USDJPY</text><text x="868" y="940" textLength="37" lengthAdjust="spacingAndGlyphs">USDCAD</text></g>
<!-- bottom -->
<rect x="0" y="967" width="1896" height="1" fill="#111"/>
<rect x="0" y="968" width="1896" height="1.500" fill="#fff"/>
<rect x="0" y="970" width="1896" height="32" fill="#f0f0f0"/>
<rect x="0" y="990" width="1896" height="1" fill="#dcdcdc"/>
<path d="M74.500 975v12M167.500 975v12M264.500 975v12M555.500 975v12" stroke="#888"/>
<path d="M362.500 970v19.500h94.500v-19.500" fill="#fff" stroke="#000" stroke-width="1.500"/>
<rect x="362" y="969" width="96" height="1.500" fill="#000"/>
<g font-size="12.500" fill="#707070">
<text x="-8" y="985" textLength="71" lengthAdjust="spacingAndGlyphs">EURUSD,M5</text><text x="85" y="985" textLength="71" lengthAdjust="spacingAndGlyphs">GBPUSD,M5</text><text x="179" y="985" textLength="73" lengthAdjust="spacingAndGlyphs">AUDUSD,M5</text><text x="276" y="985" textLength="73" lengthAdjust="spacingAndGlyphs">NZDUSD,M5</text><text x="373" y="985" textLength="73" lengthAdjust="spacingAndGlyphs" fill="#000">AUDUSD,M5</text><text x="471" y="985" textLength="72" lengthAdjust="spacingAndGlyphs">USDCAD,M5</text><text x="568" y="985" textLength="99" lengthAdjust="spacingAndGlyphs">OILMn-JUL21,M5</text>
</g>
<path d="M1860 975v8l-4-4zM1880 975v8l4-4z" fill="#9a9a9a"/>
<!-- status -->
<path d="M1102.500 995v7M1253.500 995v7M1366.500 995v7M1448.500 995v7M1529.500 995v7M1607.500 995v7M1687.500 995v7M1765.500 995v7" stroke="#8a8a8a"/>
<g font-size="12" fill="#222"><text x="-2" y="1010">帮助,请按 F1</text><text x="1108" y="1010">Default</text><text x="1260" y="1010">2021.06.18 11:35</text><text x="1372" y="1010">O: 0.75406</text><text x="1454" y="1010">H: 0.75416</text><text x="1535" y="1010">L: 0.75346</text><text x="1613" y="1010">C: 0.75368</text><text x="1792" y="1010">12 / 6 Kb</text></g>
<rect x="1771" y="997" width="10" height="5" fill="#3a8fe0"/>
</svg>
</body></html>
